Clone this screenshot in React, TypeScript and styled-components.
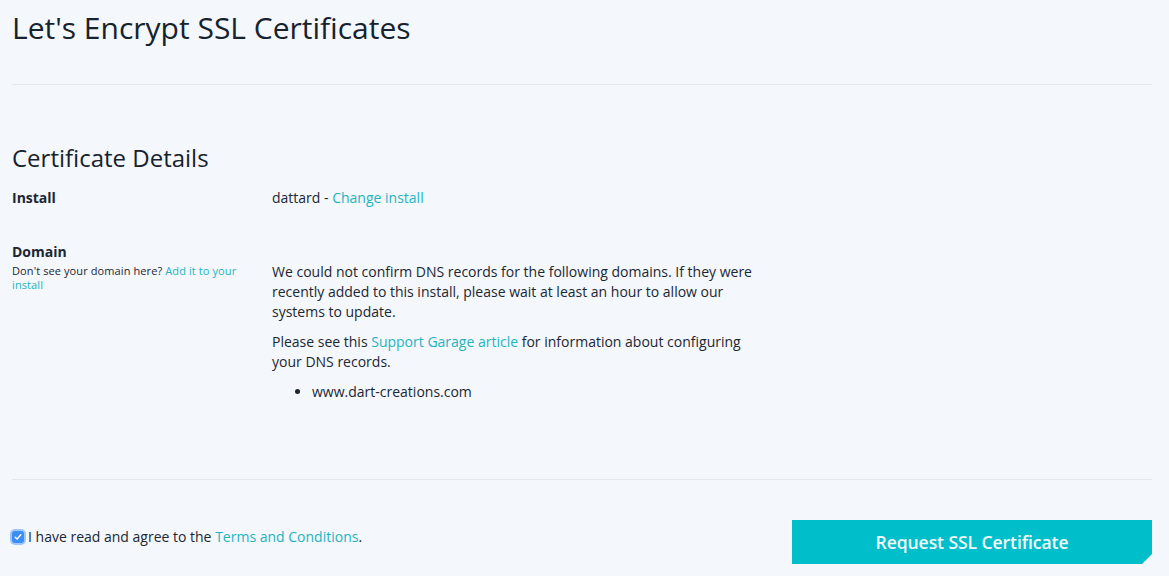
import styled, { createGlobalStyle } from "styled-components";
import { FC } from "react";

const GlobalStyle = createGlobalStyle`
  html, body {
    margin: 0;
    padding: 0;
    background: #f4f7fb;
  }
  body {
    font-family: "Open Sans", "Liberation Sans", sans-serif;
    font-size: 14px;
    line-height: 20px;
    color: #1b2733;
  }
`;

const Page = styled.div`
  padding: 0 17px 0 12px;
  min-height: 576px;
  box-sizing: border-box;
`;

const Title = styled.h1`
  margin: 8px 0 36px;
  font-size: 30px;
  line-height: 40px;
  font-weight: 400;
  color: #16222e;
`;

const Divider = styled.hr`
  margin: 0;
  border: 0;
  border-top: 1px solid #e1e6ef;
`;

const Section = styled.section`
  padding: 57px 0 77px;
`;

const SectionTitle = styled.h2`
  margin: 0 0 14px;
  font-size: 24px;
  line-height: 32px;
  font-weight: 400;
  color: #16222e;
`;

const Row = styled.div<{ $gap?: number }>`
  display: grid;
  grid-template-columns: 260px 490px;
  margin-top: ${(p) => p.$gap ?? 0}px;
`;

const Label = styled.div`
  font-weight: 700;
  line-height: 20px;
`;

const Hint = styled.div`
  font-size: 11px;
  line-height: 14px;
  font-weight: 400;
  letter-spacing: 0.1px;
  margin-top: 2px;
  padding-right: 20px;
`;

const Value = styled.div<{ $offset?: number }>`
  padding-top: ${(p) => p.$offset ?? 0}px;

  p {
    margin: 0 0 10px;
  }

  ul {
    margin: 0;
    padding-left: 40px;
  }
`;

const Link = styled.a`
  color: #25b4bf;
  text-decoration: none;
  cursor: pointer;
`;

const Footer = styled.div`
  display: flex;
  justify-content: space-between;
  align-items: flex-start;
  padding-top: 40px;
`;

const Agree = styled.label`
  display: flex;
  align-items: center;
  margin-top: 7px;
  line-height: 20px;
`;

const Check = styled.span`
  width: 12px;
  height: 12px;
  border-radius: 3px;
  background: #3b8ef5;
  box-shadow: 0 0 0 2px rgba(90, 160, 250, 0.55);
  display: flex;
  align-items: center;
  justify-content: center;
  margin: 0 4px 0 0;
`;

const Button = styled.button`
  width: 360px;
  height: 44px;
  border: 0;
  background: #00bfca;
  color: #f2fbfc;
  font-family: "Open Sans", "Liberation Sans", sans-serif;
  font-size: 17.6px;
  font-weight: 600;
  letter-spacing: -0.1px;
  cursor: pointer;
  clip-path: polygon(0 0, 100% 0, 100% calc(100% - 10px), calc(100% - 10px) 100%, 0 100%);
`;

const App: FC = () => {
  return (
    <Page>
      <GlobalStyle />
      <Title>Let's Encrypt SSL Certificates</Title>
      <Divider />
      <Section>
        <SectionTitle>Certificate Details</SectionTitle>
        <Row>
          <Label>Install</Label>
          <Value>
            dattard - <Link>Change install</Link>
          </Value>
        </Row>
        <Row $gap={34}>
          <Label>
            Domain
            <Hint>
              Don't see your domain here? <Link>Add it to your install</Link>
            </Hint>
          </Label>
          <Value $offset={20}>
            <p>
              We could not confirm DNS records for the following domains. If
              they were recently added to this install, please wait at least an
              hour to allow our systems to update.
            </p>
            <p>
              Please see this <Link>Support Garage article</Link> for
              information about configuring your DNS records.
            </p>
            <ul>
              <li>www.dart-creations.com</li>
            </ul>
          </Value>
        </Row>
      </Section>
      <Divider />
      <Footer>
        <Agree>
          <Check>
            <svg width="8" height="8" viewBox="0 0 8 8">
              <path
                d="M1.2 4.2 L3.1 6 L6.8 1.8"
                fill="none"
                stroke="#fff"
                strokeWidth="1.4"
                strokeLinecap="round"
                strokeLinejoin="round"
              />
            </svg>
          </Check>
          I have read and agree to the&nbsp;<Link>Terms and Conditions</Link>.
        </Agree>
        <Button>Request SSL Certificate</Button>
      </Footer>
    </Page>
  );
};

export default App;
